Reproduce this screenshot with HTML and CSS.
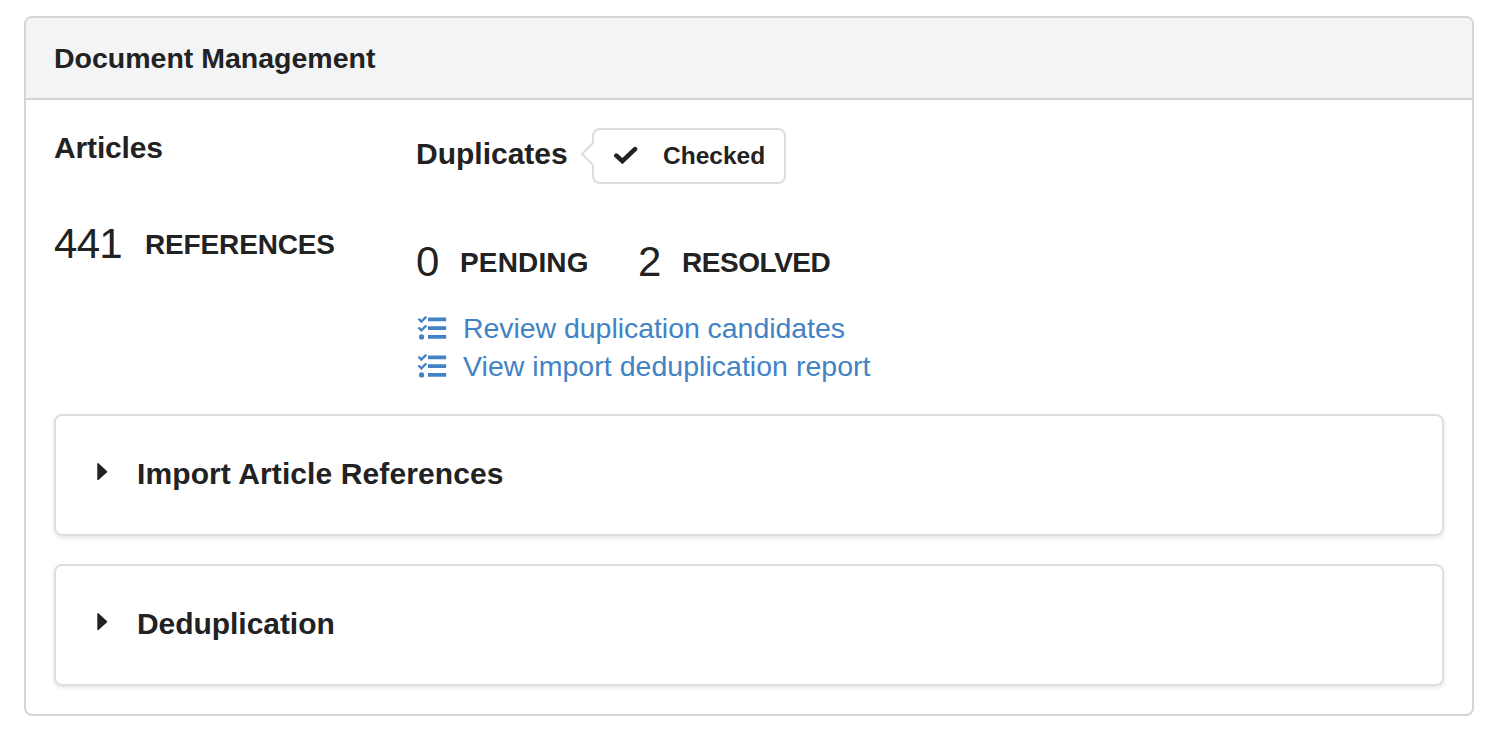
FILE: index.html
```html
<!DOCTYPE html>
<html lang="en">
<head>
<meta charset="utf-8">
<title>Document Management</title>
<link rel="stylesheet" href="styles.css">
</head>
<body>
<svg class="defs" aria-hidden="true">
  <symbol id="tasks" viewBox="0 0 30 24">
    <path d="M13 4.3h14.5M13 13h14.5M13 21.8h14.5" stroke="currentColor" stroke-width="3.7" stroke-linecap="square" transform="translate(-.2 -.9)"/>
    <path d="M2.2 3.4l2.2 2.2 4.2-4.2M2.2 12.1l2.2 2.2 4.2-4.2" fill="none" stroke="currentColor" stroke-width="2.3" stroke-linecap="round"/>
    <circle cx="4.6" cy="20.9" r="2.6" fill="currentColor"/>
  </symbol>
  <symbol id="caret" viewBox="0 0 12 20">
    <path d="M1 1.8v15.8l8.6-7.9z" fill="currentColor" stroke="currentColor" stroke-width="1.4" stroke-linejoin="round"/>
  </symbol>
</svg>
<section class="panel">
  <header class="panel-header"><h1 class="title">Document Management</h1></header>
  <div class="panel-body">
    <div class="summary">
      <div class="articles">
        <h2 class="heading articles-heading">Articles</h2>
        <div class="stats">
          <span class="number total">441</span><span class="label references">References</span>
        </div>
      </div>
      <div class="duplicates">
        <div class="duplicates-top">
          <h2 class="heading duplicates-heading">Duplicates</h2>
          <div class="status">
            <svg class="pointer" width="14" height="26" viewBox="0 0 14 26"><path d="M13 2v22" stroke="#fff" stroke-width="2"/><path d="M13 2L2 13l11 11" fill="#fff" stroke="#ddd" stroke-width="2"/></svg>
            <svg class="check" width="26" height="20" viewBox="0 0 26 20"><path d="M4.4 9.6l6 5.6L23 3.2" fill="none" stroke="#222" stroke-width="4.6" stroke-linecap="round"/></svg>
            <span class="status-text">Checked</span>
          </div>
        </div>
        <div class="stats">
          <span class="number">0</span><span class="label pending">Pending</span>
          <span class="number">2</span><span class="label resolved">Resolved</span>
        </div>
        <nav class="links">
          <a class="link"><svg class="tasks"><use href="#tasks"/></svg><span>Review duplication candidates</span></a>
          <a class="link"><svg class="tasks"><use href="#tasks"/></svg><span class="report">View import deduplication report</span></a>
        </nav>
      </div>
    </div>
    <div class="card"><svg class="caret"><use href="#caret"/></svg><h2 class="heading card-heading">Import Article References</h2></div>
    <div class="card"><svg class="caret"><use href="#caret"/></svg><h2 class="heading card-heading dedup-heading">Deduplication</h2></div>
  </div>
</section>
</body>
</html>
```

FILE: styles.css
```css
* { box-sizing: border-box; }
body {
  margin: 0;
  padding: 16px 24px 24px;
  background: #fff;
  color: #222;
  font-family: "Liberation Sans", Arial, sans-serif;
}
h1, h2 { margin: 0; }
svg { display: block; flex: none; }
.defs { display: none; }

.panel {
  height: 700px;
  border: 2px solid #d4d4d5;
  border-radius: 8px;
  overflow: hidden;
}
.panel-header {
  height: 82px;
  padding-left: 28px;
  background: #f3f4f5;
  border-bottom: 2px solid #d4d4d5;
}
.title { font-size: 28.5px; line-height: 81px; }
.panel-body { padding: 28px; }

.summary { display: flex; height: 286px; }
.articles { width: 362px; }
.heading { font-size: 30px; line-height: 36px; }
.articles-heading { padding-top: 2px; letter-spacing: -.15px; }
.duplicates-top { display: flex; align-items: center; height: 56px; }
.duplicates-heading { width: 176px; margin-top: -5px; }

.status {
  position: relative;
  display: flex;
  align-items: center;
  width: 194px;
  height: 56px;
  padding-left: 18px;
  border: 2px solid #ddd;
  border-radius: 8px;
  background: #fff;
}
.pointer { position: absolute; left: -14px; top: 11px; }
.status-text { margin-left: 25px; font-size: 24.5px; font-weight: 700; }

.stats { display: flex; align-items: center; height: 48px; }
.articles .stats { margin-top: 54px; }
.duplicates .stats { margin-top: 54px; }
.number { width: 24px; font-size: 42px; line-height: 48px; letter-spacing: -.7px; }
.total { width: 70px; }
.label { margin: 1px 0 0 20px; font-size: 28px; line-height: 32px; font-weight: 700; text-transform: uppercase; }
.references { margin-left: 21px; letter-spacing: -.15px; }
.pending { width: 128px; letter-spacing: .15px; margin-right: 50px; }
.resolved { letter-spacing: -.45px; }

.links { margin-top: 23px; }
.link { display: flex; align-items: center; height: 38px; color: #4183c4; font-size: 28.5px; line-height: 33px; letter-spacing: -.05px; }
.link span { padding-top: 1px; }
.report { letter-spacing: .03px; }
.tasks { width: 30px; height: 24px; margin: 0 16px 0 1px; }

.card {
  display: flex;
  align-items: center;
  height: 122px;
  margin-bottom: 28px;
  padding-left: 41px;
  border: 2px solid #dededf;
  border-radius: 8px;
  box-shadow: 0 2px 4px rgba(34, 36, 38, .12);
}
.caret { width: 12px; height: 20px; margin: -7px 28px 0 0; }
.card-heading { margin-top: -3px; letter-spacing: .1px; }
.dedup-heading { letter-spacing: -.05px; }
```
